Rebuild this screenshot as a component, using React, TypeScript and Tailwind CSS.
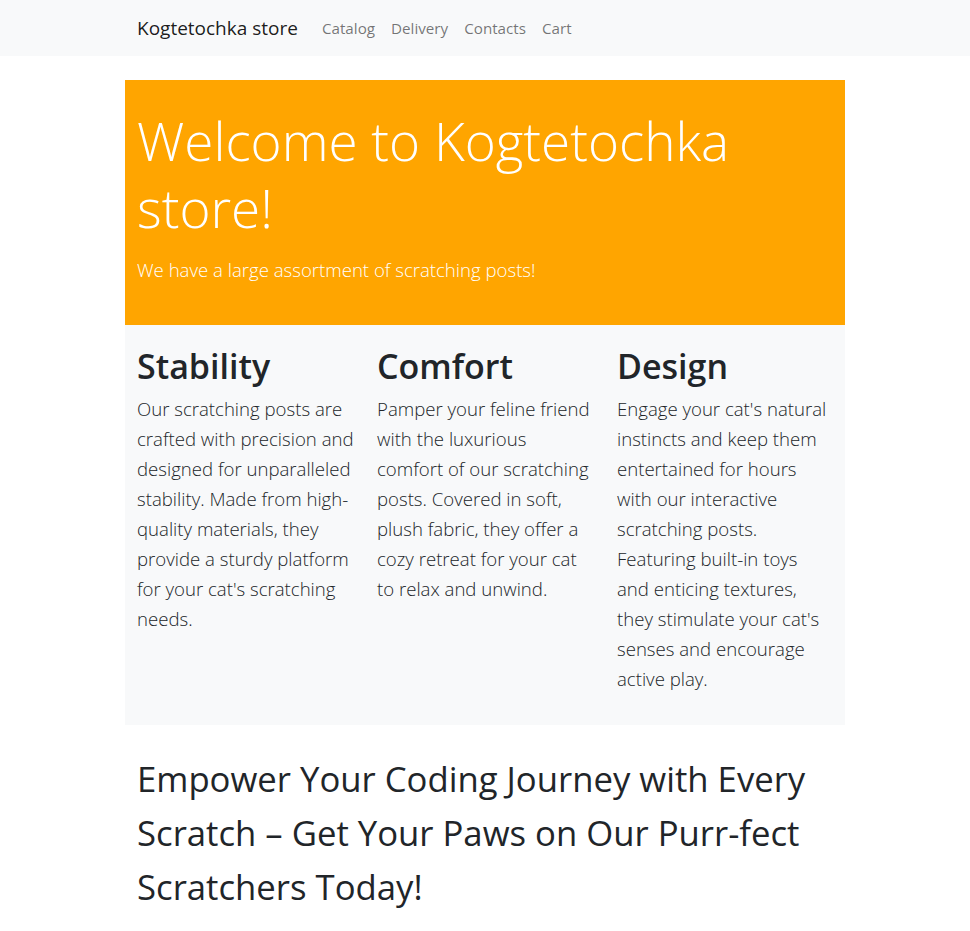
const features = [
  {
    title: 'Stability',
    lines: [
      'Our scratching posts are',
      'crafted with precision and',
      'designed for unparalleled',
      'stability. Made from high-',
      'quality materials, they',
      'provide a sturdy platform',
      "for your cat's scratching",
      'needs.',
    ],
  },
  {
    title: 'Comfort',
    lines: [
      'Pamper your feline friend',
      'with the luxurious',
      'comfort of our scratching',
      'posts. Covered in soft,',
      'plush fabric, they offer a',
      'cozy retreat for your cat',
      'to relax and unwind.',
    ],
  },
  {
    title: 'Design',
    lines: [
      "Engage your cat's natural",
      'instincts and keep them',
      'entertained for hours',
      'with our interactive',
      'scratching posts.',
      'Featuring built-in toys',
      'and enticing textures,',
      "they stimulate your cat's",
      'senses and encourage',
      'active play.',
    ],
  },
];

const links = ['Catalog', 'Delivery', 'Contacts', 'Cart'];

export default function App() {
  return (
    <div className="min-h-screen bg-white text-[#212529] font-['Open_Sans',sans-serif]">
      <nav className="bg-[#f8f9fa] h-14">
        <div className="w-[720px] mx-auto px-3 h-full flex items-center">
          <a className="text-[19px] text-[rgba(0,0,0,0.9)] mr-4">Kogtetochka store</a>
          <ul className="flex">
            {links.map((l) => (
              <li key={l}>
                <a className="px-2 text-[15.2px] text-[rgba(0,0,0,0.55)]">{l}</a>
              </li>
            ))}
          </ul>
        </div>
      </nav>

      <main className="w-[720px] mx-auto mt-6">
        <div className="bg-[#ffa500] px-3 pt-[27px] pb-[40px] text-white">
          <h1 className="text-[53px] leading-[67px] font-light">
            Welcome to Kogtetochka store!
          </h1>
          <p className="mt-[14px] text-[18.6px] leading-[30px] font-light">
            We have a large assortment of scratching posts!
          </p>
        </div>

        <div className="bg-[#f8f9fa] grid grid-cols-3 pt-[19px] pb-[31px]">
          {features.map((f) => (
            <div key={f.title} className="px-3">
              <h2 className="text-[34px] leading-[44px] font-semibold mb-[6px]">{f.title}</h2>
              <p className="text-[18.6px] leading-[30px] font-light">
                {f.lines.map((line) => (
                  <span key={line} className="block whitespace-nowrap">
                    {line}
                  </span>
                ))}
              </p>
            </div>
          ))}
        </div>

        <div className="px-3 pt-[27px] pb-6">
          <h2 className="text-[34.7px] leading-[54px]">
            Empower Your Coding Journey with Every Scratch – Get Your Paws on Our Purr-fect Scratchers Today!
          </h2>
        </div>
      </main>
    </div>
  );
}
